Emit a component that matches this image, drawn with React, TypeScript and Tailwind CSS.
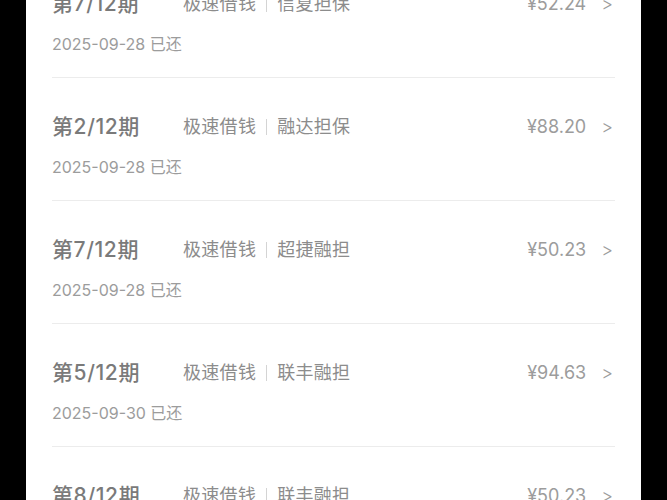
import React from "react";

const rows = [
  { period: "第7/12期", vendor: "信夏担保", amount: "¥52.24", date: "2025-09-28 已还" },
  { period: "第2/12期", vendor: "融达担保", amount: "¥88.20", date: "2025-09-28 已还" },
  { period: "第7/12期", vendor: "超捷融担", amount: "¥50.23", date: "2025-09-28 已还" },
  { period: "第5/12期", vendor: "联丰融担", amount: "¥94.63", date: "2025-09-30 已还" },
  { period: "第8/12期", vendor: "联丰融担", amount: "¥50.23", date: "2025-09-30 已还" },
];

export default function App() {
  return (
    <div
      className="w-[667px] h-[500px] overflow-hidden bg-black px-[26px] flex"
      style={{ fontFamily: 'Inter, "Noto Sans CJK SC", sans-serif' }}
    >
      <div className="flex-1 bg-white px-[26px] overflow-hidden">
        <div className="mt-[-45px]">
          {rows.map((r, i) => (
            <div key={i} className="border-b border-[#ececec] pt-[35px] pb-[21px]">
              <div className="flex items-center h-[28px]">
                <div className="w-[131px] text-[21px] tracking-[0.6px] font-medium text-[#7a7a7a] leading-[28px]">
                  {r.period}
                </div>
                <div className="flex items-center text-[18px] tracking-[0.3px] text-[#8c8c8c] leading-[28px]">
                  <span>极速借钱</span>
                  <span className="w-px h-[16px] bg-[#d4d4d4] mx-[10px]" />
                  <span>{r.vendor}</span>
                </div>
                <div className="ml-auto flex items-center text-[18px] text-[#9c9c9c] leading-[28px]">
                  <span>{r.amount}</span>
                  <span className="ml-[15px] mr-[2px] text-[18px] font-light">&gt;</span>
                </div>
              </div>
              <div className="mt-[14px] h-[24px] text-[16px] leading-[24px] text-[#9c9c9c]">
                {r.date}
              </div>
            </div>
          ))}
        </div>
      </div>
    </div>
  );
}
